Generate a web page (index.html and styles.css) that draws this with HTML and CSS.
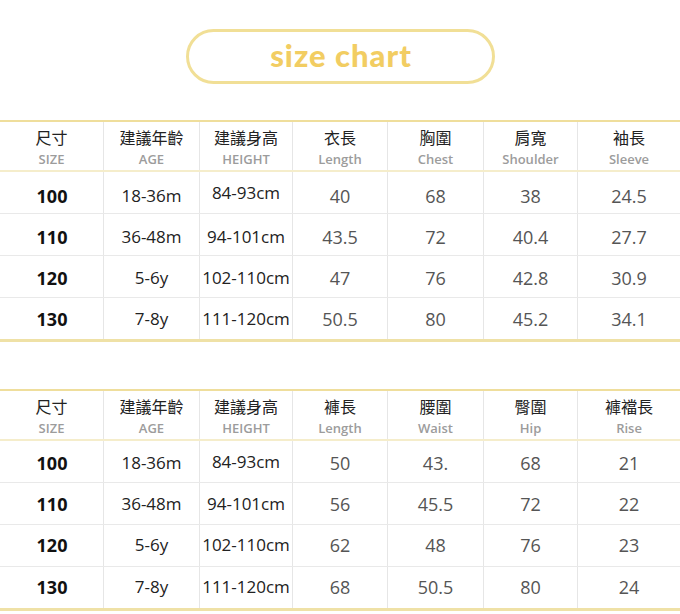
FILE: index.html
```html
<!DOCTYPE html>
<html lang="zh-Hant">
<head>
<meta charset="utf-8">
<title>size chart</title>
<link rel="stylesheet" href="styles.css">
</head>
<body>
<div class="title-wrap">
  <div class="pill">size chart</div>
</div>

<div class="chart first">
  <div class="row head">
    <div class="cell"><span class="zh">尺寸</span><span class="en">SIZE</span></div>
    <div class="cell"><span class="zh">建議年齡</span><span class="en">AGE</span></div>
    <div class="cell"><span class="zh">建議身高</span><span class="en">HEIGHT</span></div>
    <div class="cell"><span class="zh">衣長</span><span class="en">Length</span></div>
    <div class="cell"><span class="zh">胸圍</span><span class="en">Chest</span></div>
    <div class="cell"><span class="zh">肩寬</span><span class="en">Shoulder</span></div>
    <div class="cell"><span class="zh">袖長</span><span class="en">Sleeve</span></div>
  </div>
  <div class="row">
    <div class="cell size">100</div><div class="cell dark">18-36m</div><div class="cell dark hgt">84-93cm</div>
    <div class="cell">40</div><div class="cell">68</div><div class="cell">38</div><div class="cell">24.5</div>
  </div>
  <div class="row">
    <div class="cell size">110</div><div class="cell dark">36-48m</div><div class="cell dark">94-101cm</div>
    <div class="cell">43.5</div><div class="cell">72</div><div class="cell">40.4</div><div class="cell">27.7</div>
  </div>
  <div class="row">
    <div class="cell size">120</div><div class="cell dark">5-6y</div><div class="cell dark">102-110cm</div>
    <div class="cell">47</div><div class="cell">76</div><div class="cell">42.8</div><div class="cell">30.9</div>
  </div>
  <div class="row">
    <div class="cell size">130</div><div class="cell dark">7-8y</div><div class="cell dark">111-120cm</div>
    <div class="cell">50.5</div><div class="cell">80</div><div class="cell">45.2</div><div class="cell">34.1</div>
  </div>
</div>

<div class="chart second">
  <div class="row head">
    <div class="cell"><span class="zh">尺寸</span><span class="en">SIZE</span></div>
    <div class="cell"><span class="zh">建議年齡</span><span class="en">AGE</span></div>
    <div class="cell"><span class="zh">建議身高</span><span class="en">HEIGHT</span></div>
    <div class="cell"><span class="zh">褲長</span><span class="en">Length</span></div>
    <div class="cell"><span class="zh">腰圍</span><span class="en">Waist</span></div>
    <div class="cell"><span class="zh">臀圍</span><span class="en">Hip</span></div>
    <div class="cell"><span class="zh">褲襠長</span><span class="en">Rise</span></div>
  </div>
  <div class="row">
    <div class="cell size">100</div><div class="cell dark">18-36m</div><div class="cell dark hgt">84-93cm</div>
    <div class="cell">50</div><div class="cell">43.</div><div class="cell">68</div><div class="cell">21</div>
  </div>
  <div class="row">
    <div class="cell size">110</div><div class="cell dark">36-48m</div><div class="cell dark">94-101cm</div>
    <div class="cell">56</div><div class="cell">45.5</div><div class="cell">72</div><div class="cell">22</div>
  </div>
  <div class="row">
    <div class="cell size">120</div><div class="cell dark">5-6y</div><div class="cell dark">102-110cm</div>
    <div class="cell">62</div><div class="cell">48</div><div class="cell">76</div><div class="cell">23</div>
  </div>
  <div class="row">
    <div class="cell size">130</div><div class="cell dark">7-8y</div><div class="cell dark">111-120cm</div>
    <div class="cell">68</div><div class="cell">50.5</div><div class="cell">80</div><div class="cell">24</div>
  </div>
</div>
</body>
</html>
```

FILE: styles.css
```css
html, body {
  margin: 0;
  padding: 0;
  background: #ffffff;
}

body {
  width: 680px;
  font-family: "Open Sans", "Noto Sans CJK TC", sans-serif;
}

.title-wrap {
  padding-top: 29px;
  display: flex;
  justify-content: center;
}

.pill {
  box-sizing: border-box;
  width: 309px;
  height: 55px;
  border: 3px solid #f1df96;
  border-radius: 28px;
  display: flex;
  align-items: center;
  justify-content: center;
  font-family: "Lato", sans-serif;
  font-weight: 900;
  font-size: 31px;
  letter-spacing: 1px;
  color: #f2cd62;
  padding-bottom: 4px;
  padding-left: 2px;
}

.chart {
  margin-top: 36px;
  border-top: 2px solid #efde9c;
  border-bottom: 3px solid #efe1a6;
}

.chart.second {
  margin-top: 47px;
}

.row {
  display: grid;
  grid-template-columns: 104px 96px 93px 95px 96px 94px 1fr;
  grid-template-rows: 41px;
  height: 41px;
  border-bottom: 1px solid #e9e9e9;
}

.row:last-child {
  border-bottom: none;
}

.row.head {
  grid-template-rows: 48px;
  height: 48px;
  border-bottom: 2px solid #f5edcb;
}

.cell {
  border-right: 1px solid #e6e6e6;
  display: flex;
  align-items: center;
  justify-content: center;
  font-size: 18px;
  color: #555555;
  box-sizing: border-box;
  white-space: nowrap;
  min-width: 0;
}

.cell:last-child {
  border-right: none;
}

/* vertical fine-tuning of the data rows */
.first .row:nth-child(2) .cell { padding-top: 6px; }
.first .row:nth-child(3) .cell { padding-top: 4px; }
.first .row:nth-child(4) .cell { padding-top: 2px; }
.first .row:nth-child(5) .cell { padding-top: 0; }

.second .row:nth-child(2) .cell { padding-top: 2px; }
.second .row:nth-child(3) .cell { padding-top: 0; }
.second .row:nth-child(4) .cell { padding-bottom: 2px; }
.second .row:nth-child(5) .cell { padding-bottom: 2px; }

.first .row .cell.hgt { padding-top: 0; }
.second .row .cell.hgt { padding-top: 0; }

.head .cell {
  flex-direction: column;
  justify-content: flex-start;
  padding-top: 4px;
}

.zh {
  font-family: "Noto Sans CJK TC", sans-serif;
  font-size: 16px;
  line-height: 22px;
  color: #222222;
}

.en {
  font-family: "Open Sans", sans-serif;
  font-weight: 600;
  font-size: 13px;
  line-height: 18px;
  margin-top: 2px;
  color: #9c9c9c;
}

.size {
  font-weight: 700;
  color: #111111;
  padding-left: 1px;
}

.dark {
  color: #222222;
  font-size: 17px;
}
```
